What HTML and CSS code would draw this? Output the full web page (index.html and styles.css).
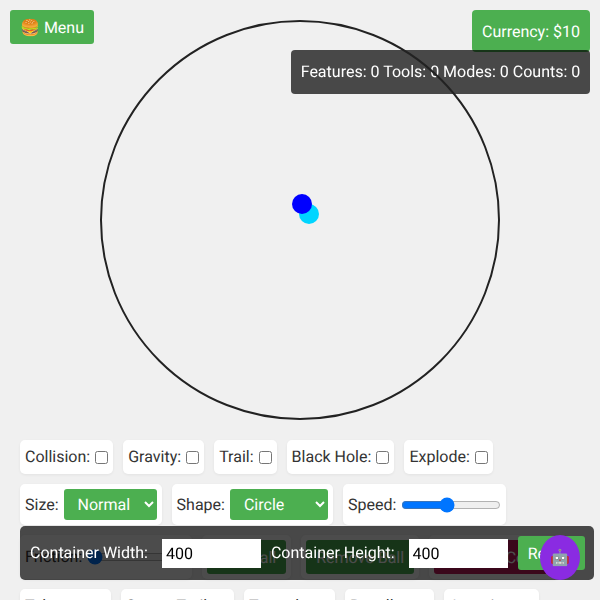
FILE: index.html
```html
<!DOCTYPE html>
<html lang="en">
<head>
    <meta charset="UTF-8">
    <meta name="viewport" content="width=device-width, initial-scale=1.0">
    <title>Bouncing Ball</title>
    <link rel="stylesheet" href="styles.css">
</head>
<body>
    <button class="menu-btn">🍔 Menu</button>
    <div class="currency">Currency: $10</div>
    <div class="stats">Features: 0 Tools: 0 Modes: 0 Counts: 0</div>

    <div class="arena">
        <div class="ball ball-trail"></div>
        <div class="ball ball-main"></div>
    </div>

    <div class="controls">
        <div class="control"><label for="collision">Collision:</label><input id="collision" type="checkbox"></div>
        <div class="control"><label for="gravity">Gravity:</label><input id="gravity" type="checkbox"></div>
        <div class="control"><label for="trail">Trail:</label><input id="trail" type="checkbox"></div>
        <div class="control"><label for="blackHole">Black Hole:</label><input id="blackHole" type="checkbox"></div>
        <div class="control"><label for="explode">Explode:</label><input id="explode" type="checkbox"></div>
    </div>
    <div class="controls">
        <div class="control">
            <label for="size">Size:</label>
            <select id="size"><option>Normal</option></select>
        </div>
        <div class="control">
            <label for="shape">Shape:</label>
            <select id="shape" class="select-shape"><option>Circle</option></select>
        </div>
        <div class="control">
            <label for="speed">Speed:</label>
            <input id="speed" class="slider" type="range" min="1" max="10" value="5">
        </div>
    </div>
    <div class="controls">
        <div class="control">
            <label for="friction">Friction:</label>
            <input id="friction" class="slider" type="range" min="0" max="100" value="0">
        </div>
        <div class="control"><button class="action">Add Ball</button></div>
        <div class="control"><button class="action">Remove Ball</button></div>
        <div class="control"><button class="action action-danger">Remove Color</button></div>
    </div>
    <div class="controls">
        <div class="control"><label for="teleport">Teleport:</label><input id="teleport" type="checkbox"></div>
        <div class="control"><label for="cometTrail">Comet Trail:</label><input id="cometTrail" type="checkbox"></div>
        <div class="control"><label for="tornado">Tornado:</label><input id="tornado" type="checkbox"></div>
        <div class="control"><label for="repeller">Repeller:</label><input id="repeller" type="checkbox"></div>
        <div class="control"><label for="amazing">Amazing:</label><input id="amazing" type="checkbox"></div>
    </div>

    <div class="size-bar">
        <label for="containerWidth">Container Width:</label>
        <input id="containerWidth" type="text" value="400">
        <label for="containerHeight">Container Height:</label>
        <input id="containerHeight" type="text" value="400">
        <button class="resize">Resize</button>
    </div>

    <button class="bot-btn">🤖</button>
</body>
</html>
```
FILE: styles.css
```css
html {
    overflow: hidden;
}

body {
    font-family: 'Roboto', sans-serif;
    font-size: 16px;
    line-height: 24px;
    text-rendering: geometricPrecision;
    background: #f0f0f0;
    margin: 0;
    padding: 20px;
    color: #333;
}

button {
    padding: 0;
    font-family: inherit;
    font-size: 16px;
    text-rendering: inherit;
    color: #fff;
    background: #4caf50;
    border: none;
    border-radius: 3px;
    white-space: nowrap;
}

.menu-btn {
    position: fixed;
    top: 10px;
    left: 10px;
    width: 84px;
    height: 34px;
}

.currency {
    position: fixed;
    top: 10px;
    right: 10px;
    width: 118px;
    height: 42px;
    line-height: 43px;
    text-align: center;
    color: #fff;
    background: #4caf50;
    border-radius: 4px;
}

.stats {
    position: fixed;
    top: 50px;
    right: 10px;
    width: 299px;
    height: 44px;
    line-height: 44px;
    text-align: center;
    white-space: nowrap;
    color: #fff;
    background: rgba(0, 0, 0, 0.7);
    border-radius: 4px;
}

.arena {
    position: relative;
    box-sizing: border-box;
    width: 400px;
    height: 400px;
    margin: 0 auto 20px;
    border: 2px solid #222;
    border-radius: 50%;
}

.ball {
    position: absolute;
    width: 20px;
    height: 20px;
    border-radius: 50%;
}

.ball-trail {
    left: 197px;
    top: 182px;
    background: #00d5ff;
}

.ball-main {
    left: 190px;
    top: 172px;
    background: #0000ff;
}

.controls {
    display: flex;
    gap: 10px;
    margin-bottom: 10px;
}

.control {
    display: flex;
    align-items: center;
    gap: 5px;
    padding: 5px;
    white-space: nowrap;
    background: #fff;
    border-radius: 5px;
    box-shadow: 0 1px 3px rgba(0, 0, 0, 0.06);
}

.control input[type="checkbox"] {
    width: 13px;
    height: 13px;
    margin: 0;
}

select {
    width: 93px;
    height: 31px;
    padding: 0 6px 0 10px;
    font-family: inherit;
    font-size: 16px;
    text-rendering: inherit;
    color: #fff;
    background: #4caf50;
    border: none;
    border-radius: 3px;
}

.select-shape {
    width: 98px;
}

.slider {
    width: 100px;
    margin: 0;
}

.action {
    height: 34px;
    padding: 0 10px;
}

.action-danger {
    background: #c2185b;
}

.size-bar {
    position: fixed;
    left: 20px;
    top: 526px;
    width: 574px;
    height: 54px;
    box-sizing: border-box;
    display: flex;
    align-items: center;
    padding: 0 10px;
    white-space: nowrap;
    color: #fff;
    background: rgba(0, 0, 0, 0.7);
    border-radius: 5px;
}

.size-bar input {
    box-sizing: border-box;
    width: 99px;
    height: 29px;
    margin: 0 10px 0 14px;
    padding: 0 4px;
    font-family: inherit;
    font-size: 16px;
    text-rendering: inherit;
    color: #000;
    background: #fff;
    border: none;
}

.resize {
    flex: none;
    width: 67px;
    height: 34px;
}

.bot-btn {
    position: fixed;
    left: 540px;
    top: 535px;
    width: 40px;
    height: 45px;
    background: #8a2be2;
    border-radius: 50%;
}
```
